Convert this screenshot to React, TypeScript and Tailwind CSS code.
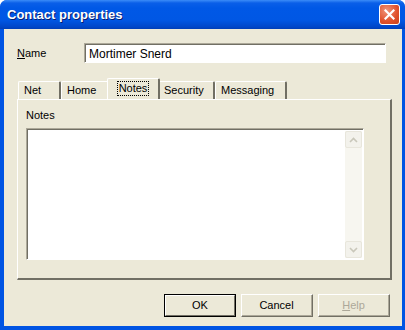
import React from 'react'

const font = { fontFamily: '"Liberation Sans", Arial, sans-serif' }

const Tab = ({ label, selected, w }: { label: string; selected?: boolean; w: string }) =>
  selected ? (
    <div
      className={`relative z-10 -mx-[2px] flex h-[21px] ${w} items-start justify-center rounded-t-[2px] border-l border-t border-r-2 border-l-white border-t-white border-r-[#716f64] bg-[#ece9d8] pt-[2px]`}
    >
      <span className="border border-dotted border-black px-[1px] leading-[13px]">{label}</span>
    </div>
  ) : (
    <div
      className={`flex h-[18px] ${w} items-start justify-start rounded-t-[2px] border-l border-t border-r-2 border-l-white border-t-white border-r-[#716f64] bg-[#ece9d8] pl-[5px] pt-[2px] leading-[13px]`}
    >
      {label}
    </div>
  )

const Chevron = ({ up }: { up?: boolean }) => (
  <svg width="9" height="6" viewBox="0 0 9 6">
    <path
      d={up ? 'M1 5 L4.5 1.5 L8 5' : 'M1 1 L4.5 4.5 L8 1'}
      fill="none"
      stroke="#c9c7ba"
      strokeWidth="1.6"
    />
  </svg>
)

const Btn = ({ label, def, disabled }: { label: React.ReactNode; def?: boolean; disabled?: boolean }) => (
  <div
    className={`flex h-[23px] w-[72px] items-center justify-center ${
      def ? 'border border-black' : 'border border-[#716f64] border-l-white border-t-white'
    } bg-[#ece9d8]`}
  >
    <div
      className={`flex h-full w-full items-center justify-center ${
        def ? 'border border-white border-b-[#716f64] border-r-[#716f64]' : 'border-b border-r border-[#aca899]'
      } ${disabled ? 'text-[#aca899]' : 'text-black'}`}
    >
      {label}
    </div>
  </div>
)

export default function App() {
  return (
    <div className="h-[330px] w-[405px] overflow-hidden bg-white text-[11px] text-black" style={font}>
      <div className="flex h-full w-full flex-col rounded-t-[7px] bg-[#0054e3]">
        {/* title bar */}
        <div className="flex h-[29px] shrink-0 items-center justify-between rounded-t-[7px] bg-[linear-gradient(to_bottom,#3b8cf8_0px,#0a5fe8_3px,#0058e6_8px,#0057e4_20px,#0046c8_27px,#003eb6_29px)] pl-[7px] pr-[5px]">
          <span
            className="text-[13px] font-bold text-white [text-shadow:1px_1px_0_#0a1e6e]"
            style={{ fontFamily: '"Liberation Sans", Arial, sans-serif' }}
          >
            Contact properties
          </span>
          <div className="flex h-[21px] w-[21px] items-center justify-center rounded-[3px] border border-white bg-[radial-gradient(circle_at_35%_30%,#f0957a,#e0502a_60%,#c9411c)]">
            <svg width="11" height="11" viewBox="0 0 11 11">
              <path d="M1.5 1.5 L9.5 9.5 M9.5 1.5 L1.5 9.5" stroke="white" strokeWidth="2.2" strokeLinecap="square" />
            </svg>
          </div>
        </div>

        {/* body */}
        <div className="flex min-h-0 flex-1 px-[3px] pb-[4px] pl-[4px]">
          <div className="flex flex-1 flex-col bg-[#ece9d8]">
            {/* name row */}
            <div className="mt-[14px] flex items-center pl-[13px]">
              <span className="w-[67px]">
                <span className="underline">N</span>ame
              </span>
              <div className="h-[20px] w-[302px] border border-b-white border-r-white border-l-[#aca899] border-t-[#aca899] bg-white">
                <div className="h-full w-full border-l border-t border-[#716f64] pl-[3px] pt-[2px] text-[12px] leading-[14px]">
                  Mortimer Snerd
                </div>
              </div>
            </div>

            {/* tabs */}
            <div className="mt-[15px] flex items-end pl-[14px]">
              <Tab label="Net" w="w-[43px]" />
              <Tab label="Home" w="w-[48px]" />
              <Tab label="Notes" w="w-[53px]" selected />
              <Tab label="Security" w="w-[57px]" />
              <Tab label="Messaging" w="w-[72px]" />
            </div>

            {/* panel */}
            <div className="ml-[13px] flex h-[181px] w-[375px] flex-col border-l border-t border-b-2 border-r-2 border-l-white border-t-white border-b-[#716f64] border-r-[#716f64] px-[8px]">
              <div className="mt-[9px] leading-[13px]">Notes</div>
              <div className="mt-[6px] flex h-[132px] w-[338px] border border-b-white border-r-white border-l-[#aca899] border-t-[#aca899]">
                <div className="flex flex-1 border-l border-t border-[#716f64] bg-white">
                  <div className="flex-1" />
                  <div className="my-[1px] mr-[1px] flex w-[17px] flex-col justify-between bg-[#f7f6f0]">
                    <div className="flex h-[17px] items-center justify-center rounded-[2px] border border-[#e8e6dc] bg-[#f3f2ec]">
                      <Chevron up />
                    </div>
                    <div className="flex h-[17px] items-center justify-center rounded-[2px] border border-[#e8e6dc] bg-[#f3f2ec]">
                      <Chevron />
                    </div>
                  </div>
                </div>
              </div>
            </div>

            {/* buttons */}
            <div className="mt-[14px] flex justify-end gap-[5px] pr-[12px]">
              <Btn label="OK" def />
              <Btn label="Cancel" />
              <Btn
                label={
                  <span>
                    <span className="underline">H</span>elp
                  </span>
                }
                disabled
              />
            </div>
          </div>
        </div>
      </div>
    </div>
  )
}
